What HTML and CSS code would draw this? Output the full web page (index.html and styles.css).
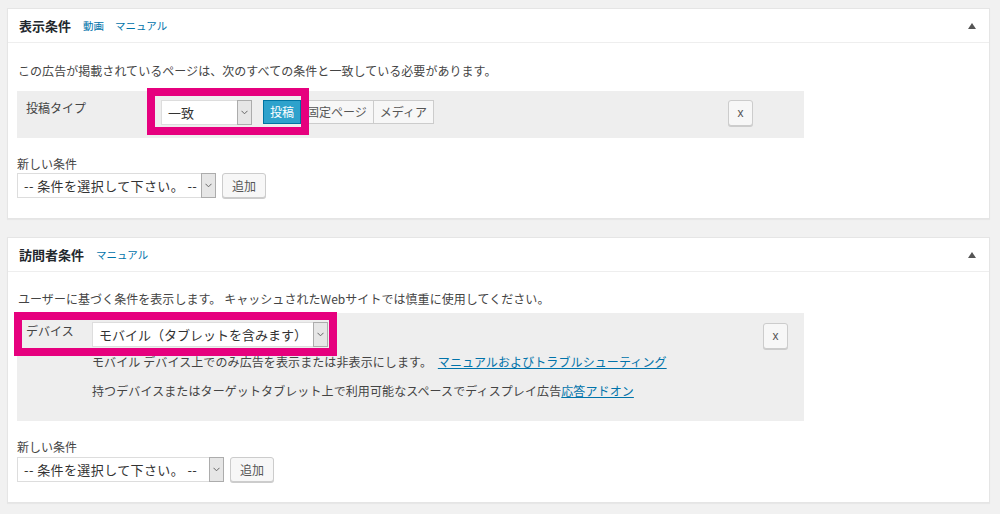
FILE: index.html
```html
<!DOCTYPE html>
<html lang="ja">
  <head>
    <meta charset="UTF-8" />
    <meta name="viewport" content="width=device-width, initial-scale=1.0" />
    <title>表示条件 / 訪問者条件</title>
    <link rel="stylesheet" href="styles.css">
  </head>
  <body>
    <div class="wrap">
      <div class="postbox">
        <div class="postbox-header">
          <h2>表示条件</h2>
          <a href="#" class="head-link">動画</a>
          <a href="#" class="head-link">マニュアル</a>
          <span class="toggle"></span>
        </div>
        <div class="inside">
          <p class="lead">この広告が掲載されているページは、次のすべての条件と一致している必要があります。</p>
          <div class="cond-row">
            <div class="cond-label">投稿タイプ</div>
            <div class="select select-match">
              <span class="select-text">一致</span>
              <span class="select-arrow"><svg width="7" height="5" viewBox="0 0 7 5"><polyline points="0.5,0.8 3.5,3.8 6.5,0.8" fill="none" stroke="#666" stroke-width="1" /></svg></span>
            </div>
            <div class="buttonset">
              <button class="active">投稿</button>
              <button>固定ページ</button>
              <button>メディア</button>
            </div>
            <button class="remove">x</button>
            <div class="marker marker-post"></div>
          </div>
          <div class="new-cond">
            <label>新しい条件</label>
            <div class="new-cond-controls">
              <div class="select select-new">
                <span class="select-text">-- 条件を選択して下さい。 --</span>
                <span class="select-arrow"><svg width="7" height="5" viewBox="0 0 7 5"><polyline points="0.5,0.8 3.5,3.8 6.5,0.8" fill="none" stroke="#666" stroke-width="1" /></svg></span>
              </div>
              <button class="add">追加</button>
            </div>
          </div>
        </div>
      </div>

      <div class="postbox">
        <div class="postbox-header">
          <h2>訪問者条件</h2>
          <a href="#" class="head-link">マニュアル</a>
          <span class="toggle"></span>
        </div>
        <div class="inside">
          <p class="lead lead-tight">ユーザーに基づく条件を表示します。 キャッシュされたWebサイトでは慎重に使用してください。</p>
          <div class="cond-row device-row">
            <div class="cond-label device-label">デバイス</div>
            <div class="select select-device">
              <span class="select-text">モバイル（タブレットを含みます）</span>
              <span class="select-arrow"><svg width="7" height="5" viewBox="0 0 7 5"><polyline points="0.5,0.8 3.5,3.8 6.5,0.8" fill="none" stroke="#666" stroke-width="1" /></svg></span>
            </div>
            <button class="remove remove-device">x</button>
            <div class="device-desc">
              <p>モバイル デバイス上でのみ広告を表示または非表示にします。 <a href="#" class="manual-link">マニュアルおよびトラブルシューティング</a></p>
              <p class="second">持つデバイスまたはターゲットタブレット上で利用可能なスペースでディスプレイ広告<a href="#">応答アドオン</a></p>
            </div>
            <div class="marker marker-device"></div>
          </div>
          <div class="new-cond">
            <label>新しい条件</label>
            <div class="new-cond-controls low">
              <div class="select select-new wide">
                <span class="select-text">-- 条件を選択して下さい。 --</span>
                <span class="select-arrow"><svg width="7" height="5" viewBox="0 0 7 5"><polyline points="0.5,0.8 3.5,3.8 6.5,0.8" fill="none" stroke="#666" stroke-width="1" /></svg></span>
              </div>
              <button class="add">追加</button>
            </div>
          </div>
        </div>
      </div>
    </div>
  </body>
</html>
```

FILE: styles.css
```css
* {
  margin: 0;
  padding: 0;
  box-sizing: border-box;
}

body {
  font-family: "Noto Sans CJK JP", "Noto Sans", sans-serif;
  font-size: 12px;
  color: #444;
  background: #f1f1f1;
}

.wrap {
  padding: 8px 10px 0 7px;
}

.postbox {
  background: #fff;
  border: 1px solid #e5e5e5;
  box-shadow: 0 1px 1px rgba(0, 0, 0, 0.04);
  margin-bottom: 18px;
}

.postbox-header {
  display: flex;
  align-items: center;
  height: 34px;
  padding: 0 13px 0 11px;
  border-bottom: 1px solid #eee;
}

.postbox-header h2 {
  font-size: 13px;
  font-weight: 700;
  color: #23282d;
  line-height: 18px;
}

.head-link {
  margin-left: 12px;
  font-size: 10.5px;
  color: #0073aa;
  text-decoration: none;
  line-height: 18px;
}

.head-link + .head-link {
  margin-left: 11px;
}

.toggle {
  margin-left: auto;
  width: 0;
  height: 0;
  border-left: 4px solid transparent;
  border-right: 4px solid transparent;
  border-bottom: 6px solid #555;
}

.inside {
  padding: 0 9px 20px 9px;
}

.lead {
  margin: 19px 0 11px 1px;
  line-height: 18px;
  letter-spacing: 0.05px;
}

.lead-tight {
  margin: 18px 0 5px 1px;
}

.cond-row {
  position: relative;
  display: flex;
  align-items: flex-start;
  width: 787px;
  padding: 9px 51px 12px 9px;
  background: #eee;
}

.cond-label {
  width: 135px;
  line-height: 16px;
}

/* select look-alike */
.select {
  display: flex;
  height: 25px;
  border: 1px solid #ddd;
  background: #fff;
  font-size: 13px;
  color: #333;
}

.select-text {
  flex: 1;
  padding: 0 6px;
  line-height: 23px;
  white-space: nowrap;
  overflow: hidden;
}

.select-new .select-text {
  letter-spacing: 0.4px;
}

.select-arrow {
  width: 15px;
  display: flex;
  align-items: center;
  justify-content: center;
  background: #e6e6e6;
  border: 1px solid #acacac;
  margin: -1px -1px -1px 0;
}

.select-match {
  width: 91px;
}

.buttonset {
  display: flex;
  margin-left: 11px;
}

.buttonset button {
  height: 24px;
  padding: 0 6px;
  border: 1px solid #ccc;
  background: #f7f7f7;
  font-family: inherit;
  font-size: 12px;
  line-height: 22px;
  color: #555;
  cursor: pointer;
}

.buttonset button + button {
  margin-left: -1px;
}

.buttonset button.active {
  background: #2ea2cc;
  border-color: #0074a2;
  color: #fff;
  position: relative;
}

.remove {
  margin-left: auto;
  width: 25px;
  height: 26px;
  border: 1px solid #ccc;
  border-radius: 3px;
  background: #f7f7f7;
  box-shadow: 0 1px 0 #ccc;
  font-family: "Liberation Sans", sans-serif;
  font-size: 12px;
  color: #555;
  cursor: pointer;
}

/* annotation frames */
.marker {
  position: absolute;
  border: 8px solid #e6007e;
  pointer-events: none;
}

.marker-post {
  left: 130px;
  top: -3px;
  width: 162px;
  height: 47px;
}

.device-row {
  display: grid;
  grid-template-columns: 66px 1fr auto;
  padding: 9px 16px 21px 9px;
}

.device-label {
  width: auto;
  padding-top: 1px;
}

.select-device {
  width: 236px;
}

.remove-device {
  margin-top: 1px;
}

.device-desc {
  grid-column: 2 / 4;
  line-height: 18px;
  margin-top: 4px;
  letter-spacing: 0.1px;
}

.device-desc .second {
  margin-top: 11px;
}

.device-desc a {
  color: #0073aa;
}

.manual-link {
  margin-left: 3px;
}

.marker-device {
  left: -3px;
  top: -1px;
  width: 323px;
  height: 44px;
}

.new-cond {
  margin-top: 18px;
}

.new-cond label {
  display: block;
  line-height: 16px;
}

.new-cond-controls {
  display: flex;
  gap: 6px;
  margin-top: 1px;
}

.new-cond-controls.low {
  margin-top: 2px;
}

.select-new {
  width: 199px;
}

.select-new.wide {
  width: 207px;
}

.add {
  width: 44px;
  height: 25px;
  border: 1px solid #ccc;
  border-radius: 3px;
  background: #f7f7f7;
  box-shadow: 0 1px 0 #ccc;
  font-family: inherit;
  font-size: 12px;
  color: #555;
  cursor: pointer;
}
```
